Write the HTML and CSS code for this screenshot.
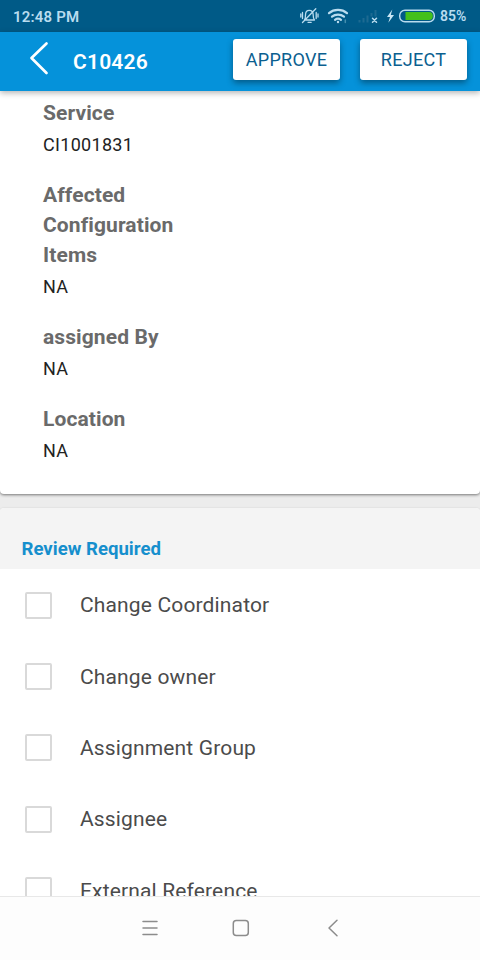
FILE: index.html
```html
<!DOCTYPE html>
<html lang="en">
<head>
<meta charset="utf-8">
<title>C10426</title>
<link rel="stylesheet" href="styles.css">
</head>
<body>
<div class="phone">
  <header class="status">
    <span class="time">12:48 PM</span>
    <svg class="status-icons" width="138" height="32" viewBox="0 0 138 32" fill="none" stroke="#b9dcef" stroke-linecap="round" stroke-linejoin="round">
      <g stroke-width="1.3">
        <path d="M4.500 20h10c-1.300-1.300-1.300-2.700-1.300-5 0-3-1.500-4.700-3.900-4.700S5.500 12 5.500 15c0 2.300 0 3.700-1 5zM8 22.300h3.200M2.500 12.500v6M.8 14v3M16.200 12.500v6M18 14v3M2.500 22.500L15.800 8.700"/>
      </g>
      <g stroke-width="2.2">
        <path d="M29 13.200c5-4.300 13-4.300 18 0M32 16.700c3.300-2.700 8.700-2.700 12 0M35 19.900c1.800-1.400 4.200-1.400 6 0"/>
        <circle cx="38" cy="22" r="1.200" fill="#b9dcef" stroke="none"/>
        <path d="M45.300 20v2.500" stroke="#438eae" stroke-width="1.500"/>
      </g>
      <g stroke="#1d6a92" stroke-width="2" stroke-linecap="butt">
        <path d="M59.500 20v2.500M63.500 18v4.500M67.500 15.500v7M71.500 13v3.500M75.500 10v6.500"/>
      </g>
      <path d="M72.500 18.300l4 4M76.500 18.300l-4 4" stroke-width="1.500"/>
      <path d="M92.300 9.500L87 17h3l-1.700 5.700L94 15h-3.200z" fill="#c9e7f5" stroke="none"/>
      <rect x="99.700" y="10.200" width="34.600" height="11.600" rx="5.200" stroke-width="1.400"/>
      <path d="M105.500 12H129a3.800 4 0 0 1 0 8h-23.500z" fill="#43c01b" stroke="none"/>
    </svg>
    <span class="percent">85%</span>
  </header>
  <nav class="appbar">
    <svg class="back" width="24" height="36" viewBox="0 0 24 36" fill="none" stroke="#fff" stroke-width="2.700" stroke-linecap="round" stroke-linejoin="round"><path d="M19.500 2.500L4.500 17L19.500 32"/></svg>
    <h1 class="title">C10426</h1>
    <button class="action">APPROVE</button>
    <button class="action">REJECT</button>
  </nav>
  <main class="content">
    <section class="details">
      <dl class="field"><dt>Service</dt><dd>CI1001831</dd></dl>
      <dl class="field"><dt>Affected Configuration Items</dt><dd>NA</dd></dl>
      <dl class="field"><dt>assigned By</dt><dd>NA</dd></dl>
      <dl class="field"><dt>Location</dt><dd>NA</dd></dl>
    </section>
    <section class="review">
      <h2 class="review-title">Review Required</h2>
      <label class="option"><span class="box"></span><span>Change Coordinator</span></label>
      <label class="option"><span class="box"></span><span>Change owner</span></label>
      <label class="option"><span class="box"></span><span>Assignment Group</span></label>
      <label class="option"><span class="box"></span><span>Assignee</span></label>
      <label class="option"><span class="box"></span><span>External Reference</span></label>
    </section>
  </main>
  <footer class="navbar">
    <svg width="18" height="18" viewBox="0 0 18 18"><path d="M2 2.500h14M2 9h14M2 15.500h14"/></svg>
    <svg width="18" height="18" viewBox="0 0 18 18"><rect x="1.300" y="1.500" width="15" height="15" rx="3"/></svg>
    <svg width="18" height="18" viewBox="0 0 18 18"><path d="M14 1.300L6 9l8 7.700"/></svg>
  </footer>
</div>
</body>
</html>
```
FILE: styles.css
```css
* { box-sizing: border-box; }
body {
  margin: 0;
  font-family: Roboto, "Liberation Sans", sans-serif;
  background: #fff;
}
h1, h2, dl, dd { margin: 0; }
.phone {
  display: flex;
  flex-direction: column;
  width: 480px;
  height: 960px;
  overflow: hidden;
}
.status {
  display: flex;
  align-items: center;
  flex: 0 0 32px;
  padding: 0 13px;
  background: #005a87;
  color: #b9dcef;
  font-weight: 600;
}
.time { font-size: 15px; letter-spacing: 0.2px; width: 287px; padding-top: 1px; }
.status-icons { flex: none; }
.percent { font-size: 14px; padding-left: 2px; }
.appbar {
  display: flex;
  flex: 0 0 59px;
  align-items: center;
  padding: 0 13px 4px 28px;
  background: #0592da;
  color: #fff;
  box-shadow: 0 2px 6px rgba(0, 0, 0, 0.3);
  z-index: 1;
}
.back { flex: none; margin: -2px 1px 0 -1px; }
.title {
  flex: 1;
  padding: 5px 0 0 21px;
  font-size: 21px;
  font-weight: 600;
  line-height: 26px;
  letter-spacing: 0.2px;
}
.action {
  width: 107px;
  height: 41px;
  margin: 0 0 0 20px;
  padding: 0;
  border: 0;
  border-radius: 3px;
  background: #fff;
  color: #0b6090;
  font: 400 18px Roboto, sans-serif;
  letter-spacing: 0.300px;
  box-shadow: 0 3px 6px rgba(0, 0, 0, 0.38);
}
.content {
  flex: 1;
  min-height: 0;
  overflow: hidden;
  background: #ececec;
}
.details {
  height: 403px;
  padding: 7px 43px 27px;
  background: #fff;
  border-radius: 0 0 4px 4px;
  box-shadow: 0 1px 3px rgba(0, 0, 0, 0.5);
}
.field { width: 150px; margin-bottom: 19px; }
.field dt {
  color: #6a6a6a;
  font-size: 21px;
  font-weight: 700;
  line-height: 30px;
  letter-spacing: 0.1px;
}
.field dd {
  padding-top: 1px;
  color: #222;
  font-size: 18px;
  line-height: 32px;
  letter-spacing: 0.300px;
}
.review {
  margin-top: 14px;
  background: #fff;
  border-radius: 4px 4px 0 0;
  box-shadow: 0 0 2px rgba(0, 0, 0, 0.12);
  overflow: hidden;
}
.review-title {
  height: 61px;
  padding: 28px 21.500px 0;
  background: #f4f4f4;
  color: #168fcd;
  font-size: 18.600px;
  font-weight: 700;
  line-height: 26px;
}
.option {
  display: flex;
  align-items: center;
  height: 71.400px;
  padding: 1px 25px 0;
  color: #4b4b4b;
  font-size: 21px;
  letter-spacing: 0.150px;
}
.box {
  width: 27px;
  height: 27px;
  margin-right: 28px;
  border: 2px solid #d9d9d9;
  border-radius: 2px;
}
.navbar {
  display: flex;
  flex: 0 0 64px;
  align-items: center;
  gap: 73px;
  padding: 0 0 2px 141px;
  border-top: 1px solid #e8e8e8;
  background: #fdfdfd;
}
.navbar svg {
  fill: none;
  stroke: #8c8c8c;
  stroke-width: 1.500;
  stroke-linecap: round;
  stroke-linejoin: round;
}
```
